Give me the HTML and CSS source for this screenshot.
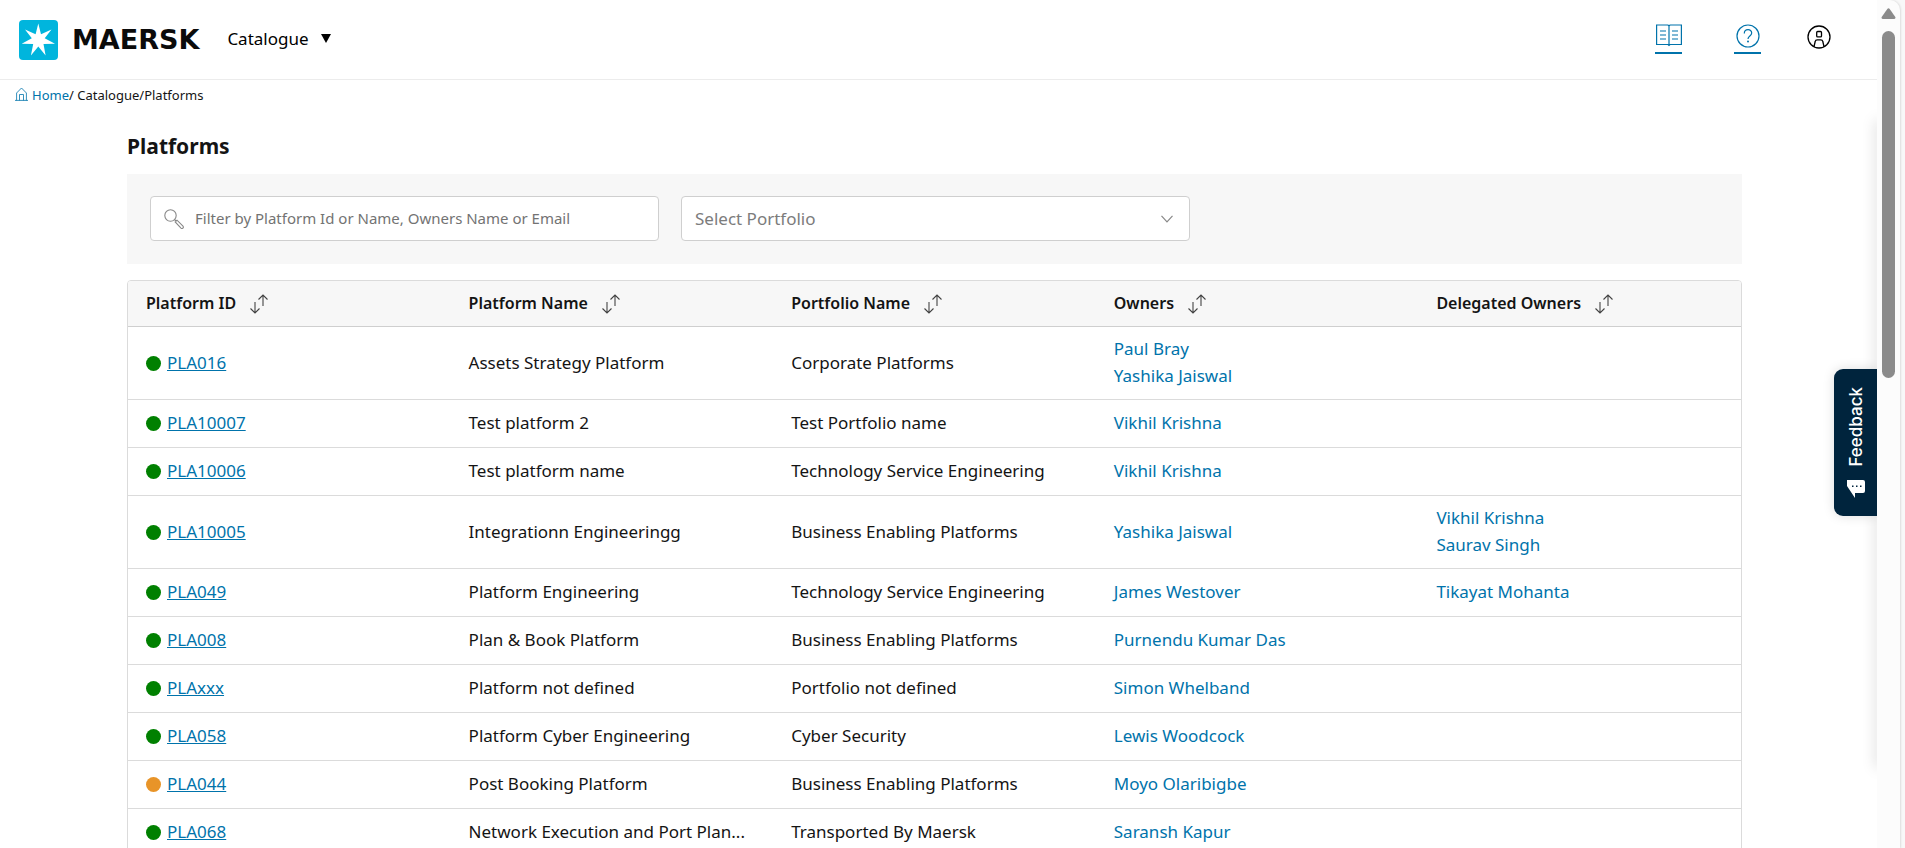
FILE: index.html
```html
<!DOCTYPE html>
<html lang="en">
<head>
<meta charset="utf-8">
<title>Platforms</title>
<link rel="stylesheet" href="styles.css">
</head>
<body>
<svg width="0" height="0" class="defs" aria-hidden="true">
  <symbol id="sort" viewBox="0 0 18 20">
    <path d="M5 8v11M.5 14.500l4.500 4.500 4.500-4.500M13 12V1M8.500 5.500L13 1l4.500 4.500" fill="none" stroke="currentColor" stroke-width="1.100"/>
  </symbol>
</svg>
<div class="app">
  <div class="page">
    <header class="topbar">
      <a class="brand" href="#" aria-label="Maersk">
        <svg width="39" height="40" viewBox="0 0 39 40" aria-hidden="true">
          <rect width="39" height="40" rx="4" fill="#00b5dd"/>
          <path d="M19.300 3.500L22 14.200L32.500 9.500L25.700 18.200L36 23.700L24.500 24L26.600 35.500L19.300 26.500L11.900 35.500L14.200 24L2.700 23.700L12.800 18.200L6 9.500L16.600 14.200Z" fill="#fff"/>
        </svg>
        <span class="wordmark">MAERSK</span>
      </a>
      <button class="menu" type="button">Catalogue
        <svg width="10" height="9" viewBox="0 0 10 9" aria-hidden="true"><path d="M0 0h10L5 9z"/></svg>
      </button>
      <nav class="tools" aria-label="Tools">
        <a class="tool" href="#" aria-label="Documentation">
          <svg width="26" height="23" viewBox="0 0 26 23" aria-hidden="true"><path d="M.6 1h11.400l1 1 1-1h11.400v19.500H14l-1 1-1-1H.6zM13 2v19M4 7h6M4 11h6M4 15h6M16 7h6M16 11h6M16 15h6" fill="none" stroke="currentColor" stroke-width="1.200"/></svg>
        </a>
        <a class="tool" href="#" aria-label="Help">
          <svg width="24" height="24" viewBox="0 0 24 24" aria-hidden="true"><circle cx="12" cy="12" r="11" fill="none" stroke="currentColor" stroke-width="1.200"/><path d="M8.300 9.500C8.300 4.500 15.700 4.500 15.700 9c0 3-3.700 3-3.700 6" fill="none" stroke="currentColor" stroke-width="1.200"/><circle cx="12" cy="17.600" r="1"/></svg>
        </a>
        <button class="account" type="button" aria-label="Account">
          <svg width="24" height="24" viewBox="0 0 24 24" aria-hidden="true"><g fill="none" stroke="currentColor" stroke-width="1.300"><circle cx="12" cy="12" r="11"/><rect x="9.700" y="6.500" width="4.800" height="5.400" rx="1"/><path d="M7 21.700l1.200-5.200q.3-1.700 2-1.700h3.600q1.700 0 2 1.700L17 21.700"/></g></svg>
        </button>
      </nav>
    </header>
    <nav class="crumbs" aria-label="Breadcrumb"><a href="#"><svg width="13" height="14" viewBox="0 0 13 14" aria-hidden="true"><path d="M0 13.400h13M1.600 13.400V6L6.500 1l4.900 5v7.400M4.500 13.400V7.500h4v5.900" fill="none" stroke="currentColor" stroke-width=".8"/></svg>Home</a>/ Catalogue/Platforms</nav>
    <main class="content">
      <h1>Platforms</h1>
      <form class="filters">
        <label class="field">
          <svg width="20" height="20" viewBox="0 0 20 20" aria-hidden="true"><g fill="none" stroke="#888" stroke-width="1.100"><circle cx="6.500" cy="6.500" r="5.700"/><path d="M10.500 10.500l1.500 1.500M11.200 13l1.800-1.800 6 6q.8 1-.1 1.900t-1.900 0z"/></g></svg>
          <input type="text" aria-label="Filter platforms" placeholder="Filter by Platform Id or Name, Owners Name or Email">
        </label>
        <label class="field">
          <select aria-label="Portfolio"><option>Select Portfolio</option></select>
          <svg width="12" height="8" viewBox="0 0 12 8" aria-hidden="true"><path d="M.5 .8L6 6.800 11.500 .8" fill="none" stroke="#888" stroke-width="1.200"/></svg>
        </label>
      </form>
      <table class="grid">
        <thead>
          <tr>
            <th><button type="button">Platform ID <svg><use href="#sort"/></svg></button></th>
            <th><button type="button">Platform Name <svg><use href="#sort"/></svg></button></th>
            <th><button type="button">Portfolio Name <svg><use href="#sort"/></svg></button></th>
            <th><button type="button">Owners <svg><use href="#sort"/></svg></button></th>
            <th><button type="button">Delegated Owners <svg><use href="#sort"/></svg></button></th>
          </tr>
        </thead>
        <tbody>
          <tr><td><i class="dot"></i><a class="id" href="#">PLA016</a></td><td>Assets Strategy Platform</td><td>Corporate Platforms</td><td><a href="#">Paul Bray</a><a href="#">Yashika Jaiswal</a></td><td></td></tr>
          <tr><td><i class="dot"></i><a class="id" href="#">PLA10007</a></td><td>Test platform 2</td><td>Test Portfolio name</td><td><a href="#">Vikhil Krishna</a></td><td></td></tr>
          <tr><td><i class="dot"></i><a class="id" href="#">PLA10006</a></td><td>Test platform name</td><td>Technology Service Engineering</td><td><a href="#">Vikhil Krishna</a></td><td></td></tr>
          <tr><td><i class="dot"></i><a class="id" href="#">PLA10005</a></td><td>Integrationn Engineeringg</td><td>Business Enabling Platforms</td><td><a href="#">Yashika Jaiswal</a></td><td><a href="#">Vikhil Krishna</a><a href="#">Saurav Singh</a></td></tr>
          <tr><td><i class="dot"></i><a class="id" href="#">PLA049</a></td><td>Platform Engineering</td><td>Technology Service Engineering</td><td><a href="#">James Westover</a></td><td><a href="#">Tikayat Mohanta</a></td></tr>
          <tr><td><i class="dot"></i><a class="id" href="#">PLA008</a></td><td>Plan &amp; Book Platform</td><td>Business Enabling Platforms</td><td><a href="#">Purnendu Kumar Das</a></td><td></td></tr>
          <tr><td><i class="dot"></i><a class="id" href="#">PLAxxx</a></td><td>Platform not defined</td><td>Portfolio not defined</td><td><a href="#">Simon Whelband</a></td><td></td></tr>
          <tr><td><i class="dot"></i><a class="id" href="#">PLA058</a></td><td>Platform Cyber Engineering</td><td>Cyber Security</td><td><a href="#">Lewis Woodcock</a></td><td></td></tr>
          <tr><td><i class="dot pending"></i><a class="id" href="#">PLA044</a></td><td>Post Booking Platform</td><td>Business Enabling Platforms</td><td><a href="#">Moyo Olaribigbe</a></td><td></td></tr>
          <tr><td><i class="dot"></i><a class="id" href="#">PLA068</a></td><td>Network Execution and Port Plan...</td><td>Transported By Maersk</td><td><a href="#">Saransh Kapur</a></td><td></td></tr>
        </tbody>
      </table>
    </main>
    <div class="edge-shadow"></div>
    <button class="feedback" type="button">
      <svg width="18" height="18" viewBox="0 0 18 18" aria-hidden="true"><path d="M0 0H16q2 0 2 2v9q0 2-2 2H8v5L0 6z" fill="#fff"/><path d="M5 6.200h1.500M9 6.200h1.500M13 6.200h1.500" stroke="#00243d" stroke-width="1.500"/></svg>
      <span>Feedback</span>
    </button>
  </div>
  <div class="scroll" aria-hidden="true">
    <svg width="15" height="11" viewBox="0 0 15 11"><path d="M6.300 1q1.200-1.500 2.400 0l5.600 8q.7 1.700-1 2H1.700q-1.700-.3-1-2z" fill="#8b8b8b"/></svg>
    <div class="thumb"></div>
  </div>
</div>
</body>
</html>
```
FILE: styles.css
```css
* { box-sizing: border-box; }
body {
  margin: 0;
  font: 17px/27px "Noto Sans", sans-serif;
  color: #141414;
  background: #f8f8f8;
}
button, input, select { font: inherit; color: inherit; }
button { border: 0; padding: 0; background: none; cursor: pointer; }
a { color: #0073ab; text-decoration: none; }
.defs { position: absolute; }
.app { display: flex; height: 100vh; overflow: hidden; padding-right: 5px; }
.page { position: relative; flex: 1; min-width: 0; overflow: hidden; background: #fff; }

.topbar {
  display: flex;
  align-items: center;
  height: 80px;
  padding: 0 46px 0 19px;
  border-bottom: 1px solid #ececec;
}
.brand { display: flex; align-items: center; gap: 14px; color: #0b0b0b; }
.wordmark { font: 700 27px/40px "DejaVu Sans", sans-serif; }
.menu { display: flex; align-items: center; gap: 12px; margin-left: 28px; padding-bottom: 2px; color: #000; }
.tools { display: flex; align-items: center; gap: 52px; margin-left: auto; padding-bottom: 2px; }
.tool {
  display: flex;
  justify-content: center;
  width: 27px;
  height: 30px;
  border-bottom: 2px solid #0073ab;
}
.tool circle:last-child { fill: currentColor; }
.account { display: flex; width: 24px; margin-left: -6px; padding-bottom: 4px; color: #000; }

.crumbs { padding: 2px 15px; font-size: 13px; white-space: pre; }
.crumbs svg { margin-right: 4px; vertical-align: -1px; }

.content { padding: 17px 135px 0 127px; }
h1 { margin: 0; font-size: 21px; line-height: 36px; font-weight: 700; }
.filters {
  display: flex;
  gap: 22px;
  margin: 10px 0 16px;
  padding: 22px 23px;
  height: 90px;
  background: #f7f7f7;
}
.field {
  display: flex;
  align-items: center;
  flex: 0 0 509px;
  height: 45px;
  padding: 0 16px 0 13px;
  border: 1px solid #cfcfcf;
  border-radius: 4px;
  background: #fff;
}
.field input {
  flex: 1;
  min-width: 0;
  margin-left: 11px;
  padding: 0;
  border: 0;
  outline: 0;
  background: none;
  font-size: 15px;
}
.field input::placeholder { color: #737373; }
.field select {
  flex: 1;
  min-width: 0;
  margin: 0;
  padding: 0;
  border: 0;
  appearance: none;
  background: none;
  color: #7c7c7c;
}

.grid {
  width: 100%;
  table-layout: fixed;
  border: 1px solid #dbdbdb;
  border-radius: 4px;
  border-spacing: 0;
  overflow: hidden;
}
.grid th {
  height: 46px;
  padding: 0 18px;
  border-bottom: 1px solid #cfcfcf;
  background: #f7f7f7;
  text-align: left;
}
.grid th button { display: flex; align-items: center; gap: 14px; font-size: 16px; font-weight: 600; white-space: nowrap; }
.grid th svg { width: 18px; height: 20px; color: #444; }
.grid td {
  height: 48px;
  padding: 8px 18px 10px;
  border-bottom: 1px solid #dbdbdb;
  white-space: nowrap;
}
.grid td a { display: block; }
.grid .id { display: inline; text-decoration: underline; }
.dot {
  display: inline-block;
  width: 15px;
  height: 15px;
  margin-right: 6px;
  border-radius: 50%;
  background: #008000;
  vertical-align: -2px;
}
.dot.pending { background: #e89428; }

.edge-shadow {
  position: absolute;
  top: 120px;
  bottom: 80px;
  right: -4px;
  width: 4px;
  box-shadow: 0 0 14px #0004;
}
.feedback {
  position: absolute;
  top: 369px;
  right: 0;
  display: flex;
  flex-direction: column-reverse;
  align-items: center;
  justify-content: space-between;
  width: 43px;
  height: 147px;
  padding: 18px 0;
  border-radius: 9px 0 0 9px;
  background: #00243d;
  box-shadow: 0 0 12px #0002;
  color: #fff;
  font: 500 17px/20px "Inter", sans-serif;
}
.feedback span { writing-mode: vertical-rl; transform: rotate(180deg); }
.scroll {
  display: flex;
  flex-direction: column;
  align-items: center;
  gap: 12px;
  width: 23px;
  padding-top: 8px;
  border-radius: 0 10px 0 0;
  background: #fcfcfc;
  box-shadow: 1px 0 2px #ddd;
}
.thumb { width: 13px; height: 347px; border-radius: 7px; background: #8b8b8b; }
```
